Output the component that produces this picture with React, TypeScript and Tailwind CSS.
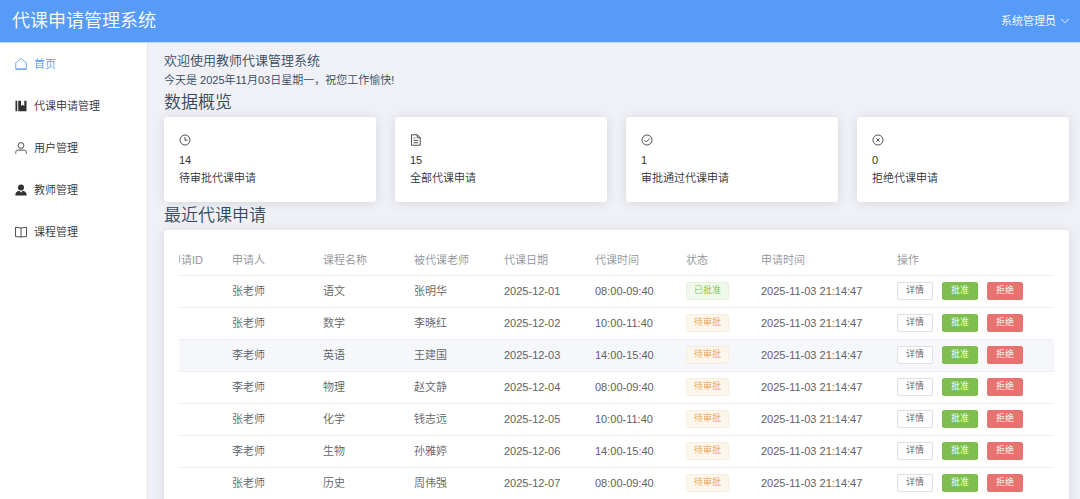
import React from "react";

type Status = "approved" | "pending";

interface Substitution {
  applicant: string;
  course: string;
  teacher: string;
  date: string;
  time: string;
  status: Status;
  createdAt: string;
}

const FONT = "font-['Liberation_Sans','Noto_Sans_CJK_SC',sans-serif] font-[350]";

const iconProps = {
  viewBox: "0 0 24 24",
  fill: "none",
  stroke: "currentColor",
  strokeWidth: 1.7,
  "aria-hidden": true,
};

function HomeIcon() {
  return (
    <svg {...iconProps} className="size-3 shrink-0">
      <path d="M1.5 9.5 12 1l10.5 8.5v13.3h-21z" />
      <path d="M1.5 21.8h21" />
    </svg>
  );
}

function NotebookIcon() {
  return (
    <svg viewBox="0 0 24 24" fill="currentColor" aria-hidden="true" className="size-3 shrink-0">
      <path d="M1 1.5h3.5v21H1zM6.500 1.500h5.500v10.500l3.300-2.600 3.300 2.600V1.500H23v21H6.500z" />
    </svg>
  );
}

function UserIcon() {
  return (
    <svg {...iconProps} className="size-3 shrink-0">
      <circle cx="12" cy="7" r="5.8" />
      <path d="M1.5 23.5v-2.8c0-2.8 2-4.5 4.6-4.5h11.8c2.6 0 4.6 1.7 4.6 4.5v2.8" />
    </svg>
  );
}

function TeacherIcon() {
  return (
    <svg viewBox="0 0 24 24" fill="currentColor" aria-hidden="true" className="size-3 shrink-0">
      <circle cx="12" cy="6.8" r="6" />
      <path d="M.5 23c0-5.5 3-8.8 8.5-9.5l3 4 3-4c5.5.7 8.5 4 8.5 9.5z" />
    </svg>
  );
}

function ReadingIcon() {
  return (
    <svg {...iconProps} className="size-3 shrink-0">
      <path d="M12 4 1 2.5V21l11 1 11-1V2.5zM12 4v18" />
    </svg>
  );
}

function ClockIcon() {
  return (
    <svg {...iconProps} className="size-3">
      <circle cx="12" cy="12" r="10" />
      <path d="M12 6v6.5h5" />
    </svg>
  );
}

function DocumentIcon() {
  return (
    <svg {...iconProps} className="size-3">
      <path d="M3 1.5h11.5l6 6v15H3z" />
      <path d="M14.5 1.5v6h6M7 8h3.5M7 12.8h9.5M7 17.5h9.5" />
    </svg>
  );
}

function CheckIcon() {
  return (
    <svg {...iconProps} className="size-3">
      <circle cx="12" cy="12" r="10" />
      <path d="m6.8 12 3.8 3.9 6.9-7" />
    </svg>
  );
}

function CloseIcon() {
  return (
    <svg {...iconProps} className="size-3">
      <circle cx="12" cy="12" r="10" />
      <path d="m8.7 8.7 6.6 6.6M15.3 8.7l-6.6 6.6" />
    </svg>
  );
}

const menuItems = [
  { label: "首页", icon: <HomeIcon />, active: true },
  { label: "代课申请管理", icon: <NotebookIcon /> },
  { label: "用户管理", icon: <UserIcon /> },
  { label: "教师管理", icon: <TeacherIcon /> },
  { label: "课程管理", icon: <ReadingIcon /> },
];

const stats = [
  { label: "待审批代课申请", value: 14, icon: <ClockIcon /> },
  { label: "全部代课申请", value: 15, icon: <DocumentIcon /> },
  { label: "审批通过代课申请", value: 1, icon: <CheckIcon /> },
  { label: "拒绝代课申请", value: 0, icon: <CloseIcon /> },
];

const columns = [
  { title: "申请ID", width: "w-[62px]" },
  { title: "申请人", width: "w-[91px]" },
  { title: "课程名称", width: "w-[91px]" },
  { title: "被代课老师", width: "w-[90px]" },
  { title: "代课日期", width: "w-[91px]" },
  { title: "代课时间", width: "w-[91px]" },
  { title: "状态", width: "w-[75px]" },
  { title: "申请时间", width: "w-[136px]" },
  { title: "操作", width: "w-[165px]" },
];

const createdAt = "2025-11-03 21:14:47";

const rows: Substitution[] = [
  { applicant: "张老师", course: "语文", teacher: "张明华", date: "2025-12-01", time: "08:00-09:40", status: "approved", createdAt },
  { applicant: "张老师", course: "数学", teacher: "李晓红", date: "2025-12-02", time: "10:00-11:40", status: "pending", createdAt },
  { applicant: "李老师", course: "英语", teacher: "王建国", date: "2025-12-03", time: "14:00-15:40", status: "pending", createdAt },
  { applicant: "李老师", course: "物理", teacher: "赵文静", date: "2025-12-04", time: "08:00-09:40", status: "pending", createdAt },
  { applicant: "张老师", course: "化学", teacher: "钱志远", date: "2025-12-05", time: "10:00-11:40", status: "pending", createdAt },
  { applicant: "李老师", course: "生物", teacher: "孙雅婷", date: "2025-12-06", time: "14:00-15:40", status: "pending", createdAt },
  { applicant: "张老师", course: "历史", teacher: "周伟强", date: "2025-12-07", time: "08:00-09:40", status: "pending", createdAt },
];

const HOVERED_ROW = 2;

function StatusTag({ status }: { status: Status }) {
  const color =
    status === "approved"
      ? "border-[#e1f3d8] bg-[#f0f9eb] text-[#78bd4f]"
      : "border-[#faecd8] bg-[#fdf6ec] text-[#e6a23c]";
  return (
    <span className={`inline-flex h-[18px] items-center rounded-[3px] border px-[7px] text-[9px] ${color}`}>
      {status === "approved" ? "已批准" : "待审批"}
    </span>
  );
}

function RowButton({ className, children }: { className: string; children: React.ReactNode }) {
  return (
    <button
      type="button"
      className={`flex h-[18px] items-center rounded-xs border px-2 text-[9px] ${className}`}
    >
      {children}
    </button>
  );
}

function Sidebar() {
  return (
    <nav className="w-[148px] shrink-0 border-r border-[#e6e6e6] bg-white">
      {menuItems.map((item) => (
        <a
          key={item.label}
          href="#"
          className={`flex h-[42px] items-center gap-[7px] pl-[15px] text-[11px] ${
            item.active ? "text-[#579bf8]" : "text-[#303133]"
          }`}
        >
          {item.icon}
          {item.label}
        </a>
      ))}
    </nav>
  );
}

function StatCards() {
  return (
    <div className="grid grid-cols-4 gap-[19px]">
      {stats.map((stat) => (
        <div
          key={stat.label}
          className="rounded-[3px] bg-white p-[15px] text-[11px] leading-[18px] text-[#303133] shadow-[0_1px_12px_rgba(0,0,0,0.11)]"
        >
          <div className="mb-[3px] flex h-4 items-center">{stat.icon}</div>
          <div>{stat.value}</div>
          <div>{stat.label}</div>
        </div>
      ))}
    </div>
  );
}

function RecentTable() {
  return (
    <div className="rounded-[3px] bg-white p-[15px] shadow-[0_1px_12px_rgba(0,0,0,0.11)]">
      {/* scrolled to the right edge, the first column is partly cut off */}
      <div className="flex justify-end overflow-hidden">
        <table className="w-full min-w-[892px] shrink-0 table-fixed text-left text-[11px] text-[#606266]">
          <thead>
            <tr className="h-[30px] border-b border-[#ebeef5] text-[#909399]">
              {columns.map((col) => (
                <th key={col.title} className={`px-2 font-[350] ${col.width}`}>
                  {col.title}
                </th>
              ))}
            </tr>
          </thead>
          <tbody>
            {rows.map((row, i) => (
              <tr
                key={row.date}
                className={`h-8 border-b border-[#ebeef5] ${i === HOVERED_ROW ? "bg-[#f5f7fa]" : ""}`}
              >
                <td className="px-2" />
                <td className="px-2">{row.applicant}</td>
                <td className="px-2">{row.course}</td>
                <td className="px-2">{row.teacher}</td>
                <td className="px-2">{row.date}</td>
                <td className="px-2">{row.time}</td>
                <td className="px-2">
                  <div className="flex">
                    <StatusTag status={row.status} />
                  </div>
                </td>
                <td className="px-2 whitespace-nowrap">{row.createdAt}</td>
                <td className="px-2">
                  <div className="flex gap-[9px]">
                    <RowButton className="border-[#dcdfe6] bg-white text-[#606266]">详情</RowButton>
                    <RowButton className="border-[#7fbf50] bg-[#7fbf50] text-white">批准</RowButton>
                    <RowButton className="border-[#e6736f] bg-[#e6736f] text-white">拒绝</RowButton>
                  </div>
                </td>
              </tr>
            ))}
          </tbody>
        </table>
      </div>
    </div>
  );
}

export default function App() {
  return (
    <div className={`flex h-screen flex-col overflow-hidden bg-[#f0f2f5] ${FONT}`}>
      <header className="flex h-[43px] shrink-0 items-center justify-between border-b border-[#bcd7fb] bg-[#579bf8] pr-[10px] pl-3 text-white">
        <h1 className="text-lg leading-6">代课申请管理系统</h1>
        <button type="button" className="flex items-center gap-1 text-[11px]">
          系统管理员
          <svg viewBox="0 0 20 20" fill="none" stroke="currentColor" strokeWidth="1.8" className="size-[10px]" aria-hidden="true">
            <path d="m2.5 6 7.5 7.5L17.5 6" />
          </svg>
        </button>
      </header>

      <div className="flex min-h-0 flex-1">
        <Sidebar />
        <main className="min-w-0 flex-1 overflow-hidden bg-[#eff1f6] pt-2 pr-[11px] pl-4 text-[#34495e]">
          <h2 className="text-[13px] leading-5">欢迎使用教师代课管理系统</h2>
          <p className="text-[11px] leading-[18px]">今天是 2025年11月03日星期一，祝您工作愉快!</p>
          <h3 className="text-[17px] leading-7">数据概览</h3>
          <StatCards />
          <h3 className="text-[17px] leading-7">最近代课申请</h3>
          <RecentTable />
        </main>
      </div>
    </div>
  );
}
